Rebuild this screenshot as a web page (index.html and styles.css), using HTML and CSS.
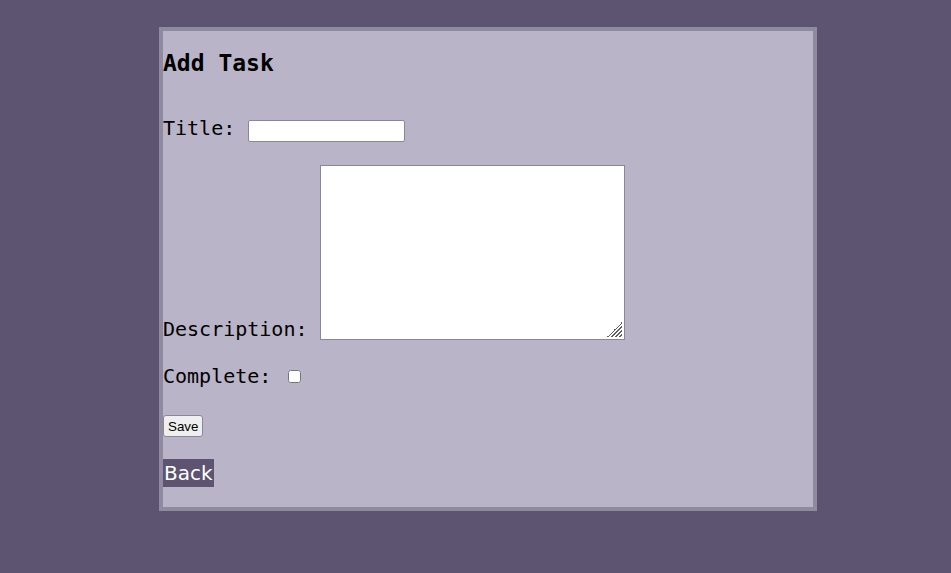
FILE: index.html
```html
<!DOCTYPE html>
<html lang="en">
<head>
<meta charset="utf-8">
<title>Add Task</title>
<link rel="stylesheet" href="styles.css">
</head>
<body>
<div class="card">
  <h2 class="heading">Add Task</h2>
  <form class="task-form">
    <p class="row"><label for="title">Title:</label> <input id="title" class="text-input" type="text"></p>
    <p class="row row-desc"><label for="desc">Description:</label> <textarea id="desc" class="desc"></textarea></p>
    <p class="row row-check"><label for="done">Complete:</label> <input id="done" class="check" type="checkbox"></p>
    <p class="row row-save"><button class="save" type="button">Save</button></p>
  </form>
  <p class="back-row"><a class="back" href="#">Back</a></p>
</div>
</body>
</html>
```
FILE: styles.css
```css
html, body {
  margin: 0;
  padding: 0;
  background: #5c5470;
}
body {
  padding-top: 27px;
}
.card {
  margin-left: 159px;
  width: 650px;
  border: 4px solid #8f8a9e;
  background: #b9b4c7;
  font-family: "DejaVu Sans Mono", monospace;
  font-size: 20px;
  color: #000;
}
.heading {
  font-size: 23px;
  margin: 19px 0 40px;
}
.task-form {
  margin: 0;
}
.row {
  margin: 20px 0;
}
.row-desc {
  margin-top: 23px;
}
.row-check {
  margin-top: 23px;
}
.row-save {
  margin-top: 24px;
}
.text-input {
  box-sizing: border-box;
  width: 157px;
  height: 22px;
  margin: 0 0 0 1px;
  border: 1px solid #8a8797;
  border-radius: 2px;
  background: #fff;
}
.desc {
  box-sizing: border-box;
  width: 305px;
  height: 175px;
  margin: 0;
  border: 1px solid #8a8797;
  resize: none;
  vertical-align: -4px;
  background:
    linear-gradient(to bottom right, #fff 50%, transparent 50%) right 2px bottom 2px / 15px 15px no-repeat,
    repeating-linear-gradient(135deg, transparent 0 1.6px, #5f5f5f 1.6px 2.9px) right 2px bottom 2px / 15px 15px no-repeat,
    #fff;
}
.check {
  width: 13px;
  height: 13px;
  margin: 3px 3px 3px 5px;
}
.save {
  box-sizing: border-box;
  height: 22px;
  padding: 1px 4px;
  font-family: "Liberation Sans", Arial, sans-serif;
  font-size: 13.33px;
  color: #000;
  background: #efefef;
  border: 1px solid #8a8797;
  border-radius: 3px;
}
.back-row {
  margin: 22px 0 20px;
}
.back {
  display: inline-block;
  background: #5c5470;
  color: #fff;
  text-decoration: none;
  font-family: "DejaVu Sans", sans-serif;
  font-size: 20px;
  padding: 2px 1px;
}
```
